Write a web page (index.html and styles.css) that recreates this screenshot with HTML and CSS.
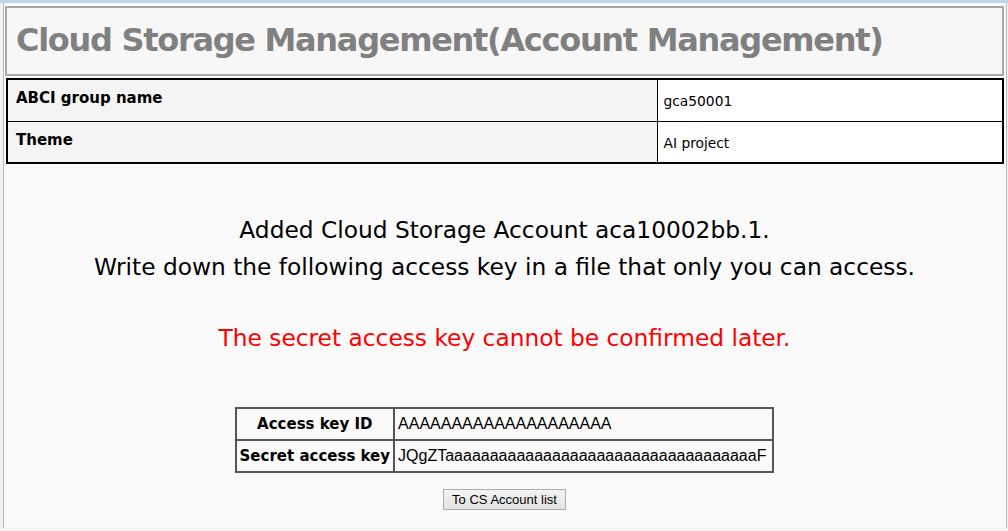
FILE: index.html
```html
<!DOCTYPE html>
<html lang="en">
<head>
<meta charset="utf-8">
<title>Cloud Storage Management</title>
<link rel="stylesheet" href="styles.css">
</head>
<body>
<div class="frame">
  <div class="title-box">
    <h1 class="title">Cloud Storage Management(Account Management)</h1>
  </div>
  <table class="info">
    <tr>
      <th class="info-label">ABCI group name</th>
      <td class="info-value">gca50001</td>
    </tr>
    <tr>
      <th class="info-label">Theme</th>
      <td class="info-value">AI project</td>
    </tr>
  </table>
  <div class="message">
    <p class="msg-line">Added Cloud Storage Account aca10002bb.1.<br>Write down the following access key in a file that only you can access.</p>
    <p class="msg-warn">The secret access key cannot be confirmed later.</p>
  </div>
  <table class="keys">
    <tr>
      <th class="key-label">Access key ID</th>
      <td class="key-value">AAAAAAAAAAAAAAAAAAAA</td>
    </tr>
    <tr>
      <th class="key-label">Secret access key</th>
      <td class="key-value">JQgZTaaaaaaaaaaaaaaaaaaaaaaaaaaaaaaaaaaaF</td>
    </tr>
  </table>
  <div class="actions">
    <button class="btn" type="button">To CS Account list</button>
  </div>
</div>
</body>
</html>
```
FILE: styles.css
```css
html, body {
  margin: 0;
  padding: 0;
  height: 100%;
}
body {
  background: #f2f2f2;
  font-family: "DejaVu Sans", Verdana, sans-serif;
  color: #000;
  border-top: 3px solid #bcd6ea;
  box-sizing: border-box;
}
.frame {
  margin: 0 1px 0 3px;
  border-left: 1px solid #b8b8b8;
  border-right: 1px solid #b8b8b8;
  background: #fafafa;
  padding: 3px 2px 0 1px;
  min-height: calc(100% - 3px);
  box-sizing: border-box;
}
.title-box {
  border: 2px solid #a8a8a8;
  background: #f7f7f7;
  height: 70px;
  box-sizing: border-box;
  display: flex;
  align-items: center;
  padding-left: 9px;
  padding-bottom: 2px;
}
.title {
  margin: 0;
  font-size: 32px;
  font-weight: bold;
  color: #808080;
  letter-spacing: -1.3px;
}
.info {
  margin: 2px 0 0 1px;
  width: calc(100% - 1px);
  border-collapse: collapse;
  border: 2px solid #000;
  font-size: 15px;
}
.info-label, .info-value {
  border: 1.5px solid #000;
  height: 42px;
  box-sizing: border-box;
  padding: 0 8px;
  text-align: left;
  vertical-align: middle;
}
.info-label {
  background: #f4f4f4;
  width: 650px;
  font-weight: bold;
  padding-bottom: 4px;
}
.info-value {
  background: #fff;
  font-weight: normal;
  font-size: 13.8px;
  padding-left: 6px;
  padding-top: 2px;
}
.message {
  text-align: center;
  font-size: 23.3px;
  margin-top: 47px;
}
.msg-line {
  margin: 0;
  line-height: 37px;
}
.msg-warn {
  margin: 34px 0 0;
  color: #ff0000;
  line-height: 37px;
}
.keys {
  margin: 51px auto 0;
  border-collapse: collapse;
  border: 2px solid #555;
}
.key-label, .key-value {
  border: 2px solid #555;
  height: 32px;
  box-sizing: border-box;
  padding: 0 3px;
}
.key-label {
  font-weight: bold;
  font-size: 15px;
  text-align: center;
  white-space: nowrap;
}
.key-value {
  font-family: "Liberation Sans", Arial, sans-serif;
  font-size: 16px;
  text-align: left;
  background: #fafafa;
  padding-right: 6px;
}
.actions {
  text-align: center;
  margin-top: 16px;
}
.btn {
  font-family: "Liberation Sans", Arial, sans-serif;
  font-size: 13px;
  padding: 1px 8px;
  height: 21px;
  border: 1px solid #adadad;
  border-radius: 0;
  background: linear-gradient(#f4f4f4, #e2e2e2);
  color: #000;
}
```
